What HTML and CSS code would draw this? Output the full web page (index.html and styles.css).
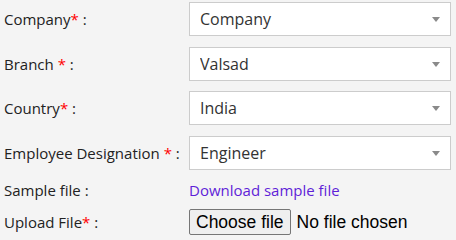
FILE: index.html
```html
<!DOCTYPE html>
<html lang="en">
<head>
    <meta charset="UTF-8">
    <title>Employee Form</title>
    <link rel="stylesheet" href="styles.css">
</head>
<body>
    <form class="form">
        <label class="label">Company<span class="req">*</span> :</label>
        <div class="select-wrap">
            <select class="select"><option>Company</option></select>
        </div>

        <label class="label">Branch <span class="req">*</span> :</label>
        <div class="select-wrap">
            <select class="select"><option>Valsad</option></select>
        </div>

        <label class="label">Country<span class="req">*</span> :</label>
        <div class="select-wrap">
            <select class="select"><option>India</option></select>
        </div>

        <label class="label">Employee Designation <span class="req">*</span> :</label>
        <div class="select-wrap">
            <select class="select"><option>Engineer</option></select>
        </div>

        <label class="label">Sample file :</label>
        <div><a class="link" href="#">Download sample file</a></div>

        <label class="label">Upload File<span class="req">*</span> :</label>
        <div class="file-row">
            <button type="button" class="file-btn">Choose file</button>
            <span class="file-name">No file chosen</span>
        </div>
    </form>
</body>
</html>
```
FILE: styles.css
```css
body {
    margin: 0;
    padding: 2px 5px 0 4px;
    background: #f4f4f4;
    font-family: 'Open Sans', sans-serif;
    color: #222;
    overflow: hidden;
}

.form {
    display: grid;
    grid-template-columns: 185px minmax(0, 1fr);
    grid-template-rows: repeat(4, 34px) 18px 26px;
    row-gap: 10.67px;
    align-items: center;
}

.label {
    font-size: 15px;
    white-space: nowrap;
}

.req {
    color: #f00;
}

.select-wrap {
    position: relative;
    height: 34px;
    min-width: 0;
}

.select-wrap::after {
    content: "";
    position: absolute;
    right: 11px;
    top: 15px;
    border-left: 4px solid transparent;
    border-right: 4px solid transparent;
    border-top: 5px solid #8a8a8a;
    pointer-events: none;
}

.select {
    appearance: none;
    display: block;
    width: 100%;
    height: 34px;
    box-sizing: border-box;
    border: 1px solid #ccc;
    border-radius: 0;
    background: #fff;
    padding: 0 10px;
    font-family: 'Open Sans', sans-serif;
    font-size: 16px;
    color: #333;
    outline: none;
}

.link {
    font-size: 15px;
    color: #5f1ed8;
    text-decoration: none;
}

.file-row {
    display: flex;
    align-items: center;
    gap: 6px;
    font-family: 'Liberation Sans', Arial, sans-serif;
    font-size: 17.5px;
    color: #000;
}

.file-btn {
    height: 26px;
    padding: 0 6px;
    background: #efefef;
    border: 1px solid #767676;
    border-radius: 2px;
    font-family: inherit;
    font-size: inherit;
    color: #000;
}
```
